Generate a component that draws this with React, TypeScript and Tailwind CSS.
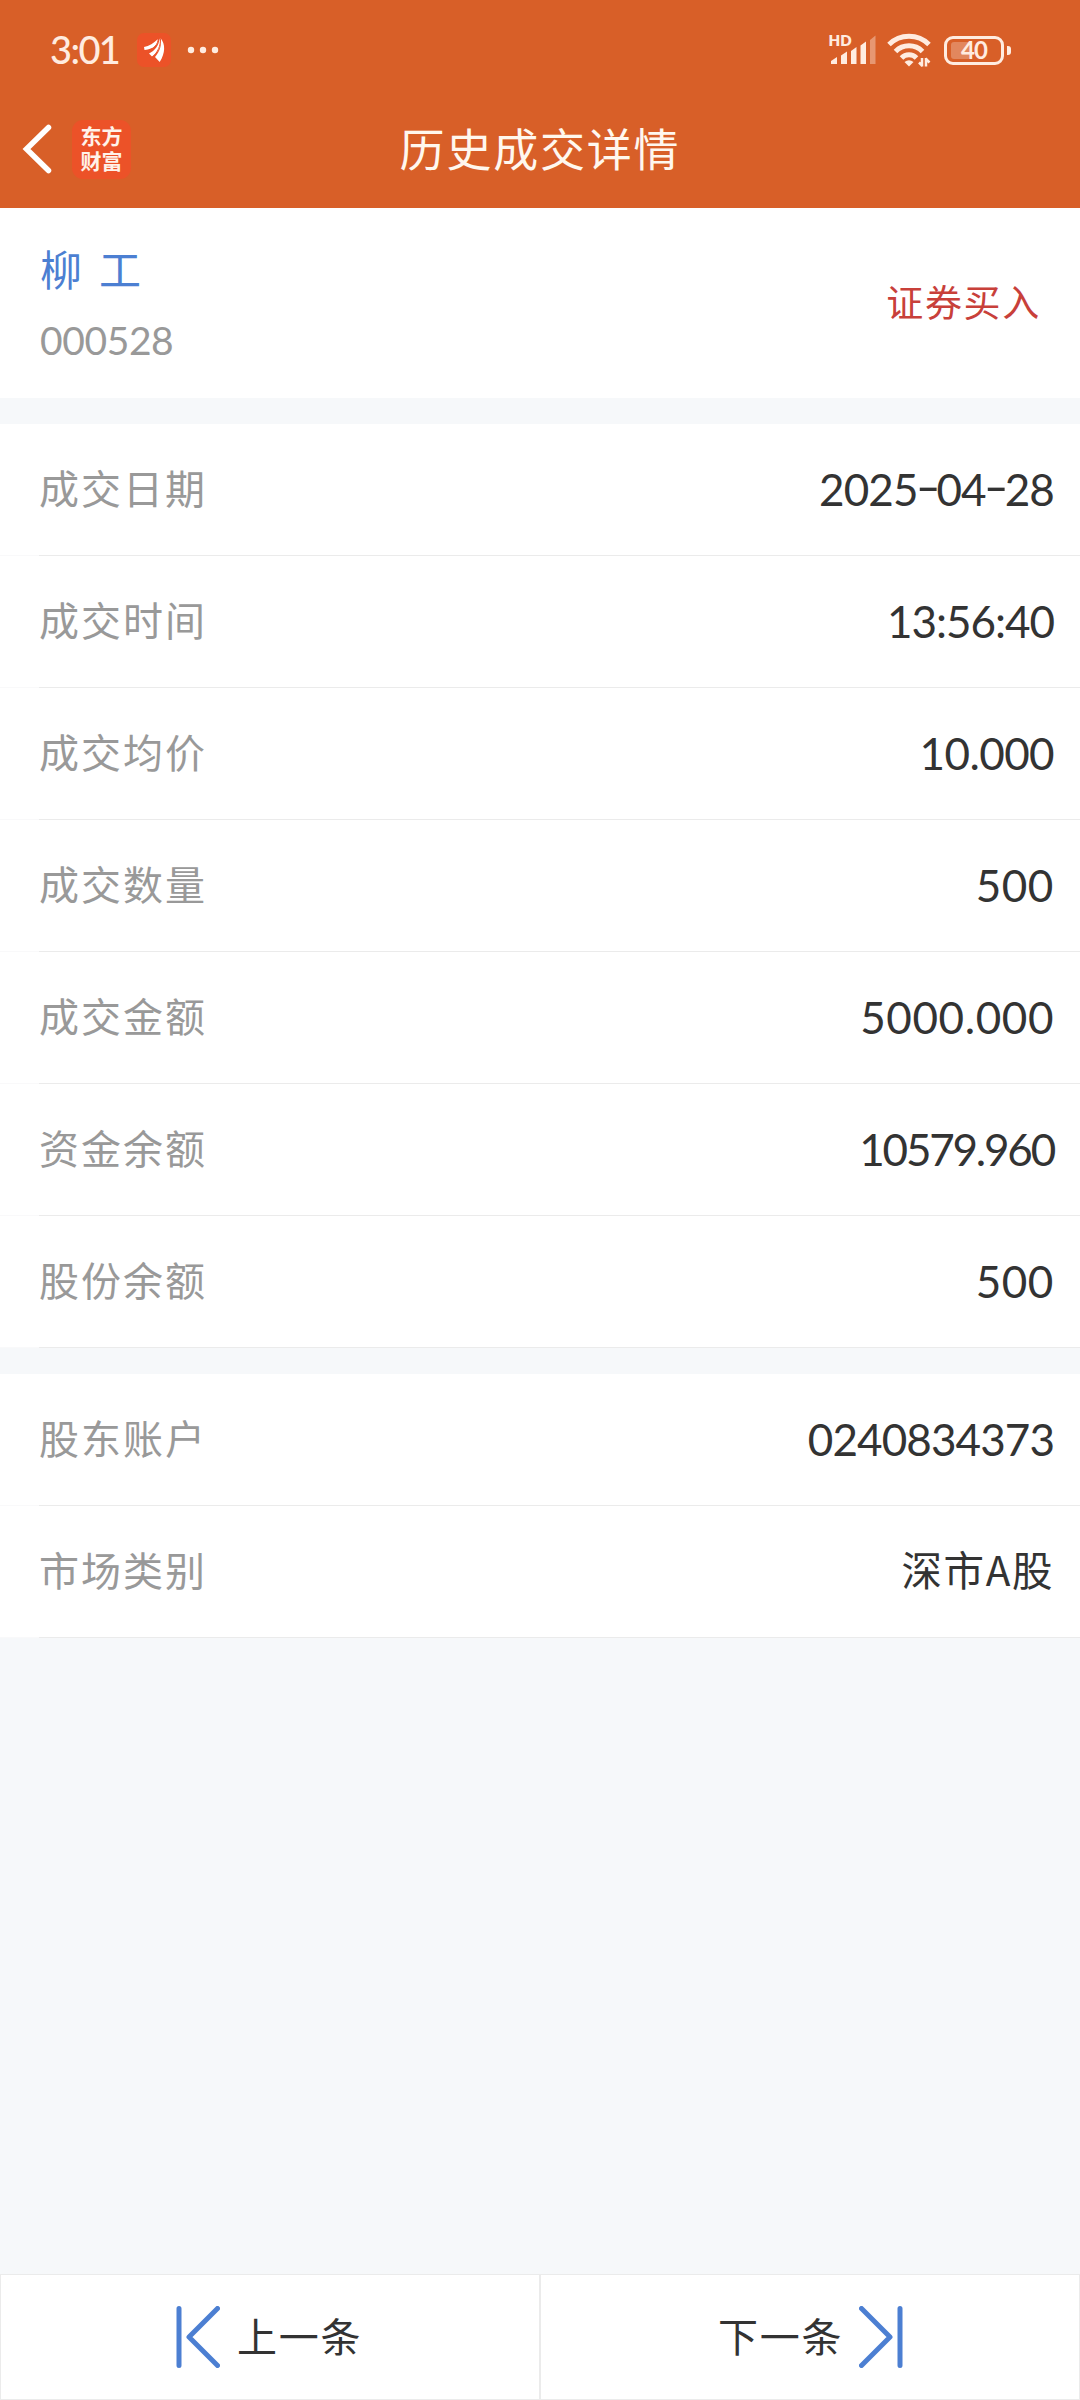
import { Fragment } from "react";
import clsx from "clsx";

type Item = { label: string; value: string; tracking?: string };

const tradeItems: Item[] = [
    { label: "成交日期", value: "2025-04-28", tracking: "tracking-[-0.9px]" },
    { label: "成交时间", value: "13:56:40", tracking: "tracking-[-1px]" },
    { label: "成交均价", value: "10.000", tracking: "tracking-[-0.6px]" },
    { label: "成交数量", value: "500", tracking: "tracking-[0.6px]" },
    { label: "成交金额", value: "5000.000", tracking: "tracking-[0.6px]" },
    { label: "资金余额", value: "10579.960", tracking: "tracking-[-2.2px]" },
    { label: "股份余额", value: "500", tracking: "tracking-[0.6px]" },
];

const accountItems: Item[] = [
    { label: "股东账户", value: "0240834373", tracking: "tracking-[-0.9px]" },
    { label: "市场类别", value: "深市A股", tracking: "tracking-[1.6px]" },
];

function StatusBar() {
    return (
        <div className="flex h-[100px] items-center justify-between pl-[50px] pr-[69px] text-[#ffece0]">
            <div className="flex items-center">
                <span className="w-[87px] pb-[2px] font-['Lato'] text-[38px] font-medium leading-none tracking-[-1.6px]">3:01</span>
                <svg className="h-[34px] w-[34px]" viewBox="0 0 34 34">
                    <rect width="34" height="34" rx="7" fill="#ec5228" />
                    <path d="M7 14C12 13 17 10 21 6c1 5-4 10-13.500 11z" fill="#fff" />
                    <path d="M12 20.500c6-3 10-8 10.500-15 3 6-1 14-7.500 18z" fill="#fff" />
                    <path d="M18 24c5-6 7-12 5.500-19 5 6 5 15-.8 24z" fill="#fff" />
                    <path d="M21.200 5.500c0 6-4.500 10.500-12.200 13.500M23.200 5.500c1 7-2.700 14-7.700 18.500" fill="none" stroke="#ec5228" strokeWidth="1" />
                </svg>
                <svg className="ml-[16px] h-[8px] w-[32px]" viewBox="0 0 32 8" fill="currentColor">
                    <circle cx="4" cy="4" r="3.200" />
                    <circle cx="16" cy="4" r="3.200" />
                    <circle cx="28" cy="4" r="3.200" />
                </svg>
            </div>

            <div className="flex items-center">
                <svg className="h-[48px] w-[52px]" viewBox="-4 -8 52 48" fill="currentColor">
                    <text x="-0.500" y="11.500" fontFamily="Lato" fontWeight="800" fontSize="15">HD</text>
                    <path d="M2 27l6-4v7H2zM12 21.500l6-4V30h-6zM22 17l5.500-4v17H22zM31.500 11.500l5.500-4V30h-5.500z" />
                    <path d="M41 6l5.500-4.500V30H41z" opacity=".4" />
                </svg>
                <svg className="ml-[10px] h-[34px] w-[44px]" viewBox="0 0 44 34" fill="none" stroke="currentColor" strokeWidth="5">
                    <path d="M2 11.500a28.500 28.500 0 0 1 40 0M8.500 18.500a19 19 0 0 1 27 0M14.500 25a10.500 10.500 0 0 1 15 0" />
                    <path d="M17.500 29q4.500-3.600 9 0L22 33.500z" fill="currentColor" stroke="none" />
                    <path d="M35 25v8.500M39 33.500V25M35.500 33l-3.500-3.500M38.500 25.500l4 4" strokeWidth="2.500" />
                </svg>
                <div className="ml-[13px] flex h-[29px] w-[60px] items-center rounded-[9px] border-[3px] border-current">
                    <div className="ml-[4px] h-[17px] w-[20px] rounded-[3px] bg-white/25" />
                    <span className="-ml-[10px] font-['Lato'] text-[24px] font-bold leading-none tracking-[-1px]">40</span>
                </div>
                <div className="ml-[3px] h-[9px] w-[4px] rounded-r-[3px] bg-current" />
            </div>
        </div>
    );
}

function NavBar() {
    return (
        <div className="grid h-[98px] grid-cols-[1fr_auto_1fr] items-center">
            <div className="flex items-center pl-[21px]">
                <svg className="h-[50px] w-[33px]" viewBox="0 0 33 50" fill="none" stroke="#fff" strokeWidth="5.500" strokeLinecap="round">
                    <path d="M27.500 3.500L5.500 25l22 21.500" strokeLinejoin="miter" />
                </svg>
                <div className="ml-[18px] h-[59px] w-[59px] rounded-[11px] bg-[#ec5228] pt-[3px] text-center text-[21px] font-bold leading-[25px] text-[#fff3ea]">
                    东方
                    <br />
                    财富
                </div>
            </div>
            <h1 className="pb-[3px] text-[45px] leading-none tracking-[1.8px] text-[#fff7ee]">历史成交详情</h1>
            <div />
        </div>
    );
}

// raises and widens the hyphens so they sit at mid digit height
function Digits({ text }: { text: string }) {
    return text.split("-").map((part, i) => (
        <Fragment key={i}>
            {i > 0 && <span className="inline-block w-[19px] -translate-y-[3px] scale-x-[1.55] text-center">-</span>}
            {part}
        </Fragment>
    ));
}

function Row({ label, value, tracking }: Item) {
    const isText = value.includes("股");
    return (
        <div className="h-[132px]">
            <div className="flex h-[131px] items-center justify-between pl-[39px] pr-[26px]">
                <span className="pb-[5px] text-[40px] leading-none tracking-[2px] text-[#999]">{label}</span>
                <span
                    className={clsx(
                        "leading-none text-[#333]",
                        isText ? "pb-[5px] text-[40.5px]" : "pb-[2px] font-['Lato'] text-[44px]",
                        tracking
                    )}
                >
                    <Digits text={value} />
                </span>
            </div>
            {/* the divider is lighter below the left inset */}
            <div className="flex h-px">
                <div className="w-[39px] bg-[#f9f9fa]" />
                <div className="flex-1 bg-[#ebebeb]" />
            </div>
        </div>
    );
}

function StepIcon({ flip }: { flip?: boolean }) {
    return (
        <svg
            className={clsx("h-[62px] w-[44px]", flip && "-scale-x-100")}
            viewBox="0 0 44 62"
            fill="none"
            stroke="#4c7fd2"
            strokeWidth="5"
            strokeLinecap="round"
            strokeLinejoin="round"
        >
            <path d="M3 2.500v57M41.500 2.500L13 31l28.500 28.500" />
        </svg>
    );
}

export default function App() {
    return (
        <div className="flex h-[2400px] w-[1080px] flex-col bg-[#f6f8fa] font-['Noto_Sans_CJK_SC',sans-serif]">
            <header className="h-[208px] bg-[#d85f28]">
                <StatusBar />
                <NavBar />
            </header>

            {/* Stock */}
            <section className="flex h-[190px] items-center justify-between bg-white pl-[40px] pr-[39px]">
                <div className="pb-[5px]">
                    <div className="flex gap-[17px] text-[42px] leading-[60px] text-[#4c7fd2]">
                        <span>柳</span>
                        <span>工</span>
                    </div>
                    <div className="mt-[18px] font-['Lato'] text-[39px] leading-[48px] tracking-[-0.4px] text-[#999]">000528</div>
                </div>
                <span className="pb-[3px] text-[37px] leading-none tracking-[1.7px] text-[#c8403a]">证券买入</span>
            </section>

            <section className="mt-[26px] bg-white">
                {tradeItems.map((item) => (
                    <Row key={item.label} {...item} />
                ))}
            </section>

            <section className="mt-[26px] bg-white">
                {accountItems.map((item) => (
                    <Row key={item.label} {...item} />
                ))}
            </section>

            {/* Pager */}
            <footer className="mt-auto grid h-[126px] grid-cols-2 bg-white text-[40px] tracking-[1.8px] text-[#333]">
                <button className="flex items-center border border-[#ebebeb] pl-[175px]">
                    <StepIcon />
                    <span className="ml-[17px] pb-[5px]">上一条</span>
                </button>
                <button className="flex items-center border border-[#ebebeb] pl-[177px]">
                    <span className="mr-[16px] pb-[5px]">下一条</span>
                    <StepIcon flip />
                </button>
            </footer>
        </div>
    );
}
